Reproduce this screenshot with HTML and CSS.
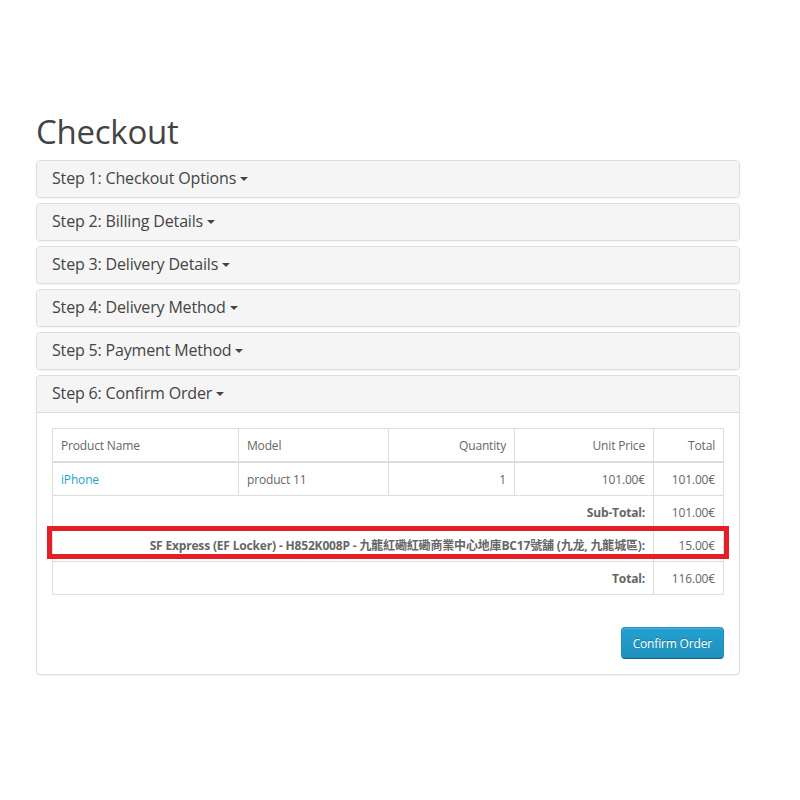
FILE: index.html
```html
<!DOCTYPE html>
<html>
<head>
<meta charset="utf-8">
<link rel="stylesheet" href="styles.css">
</head>
<body>
<div class="container">
  <h1 class="title">Checkout</h1>
  <div class="panel"><div class="panel-heading"><span>Step 1: Checkout Options</span><i class="caret"></i></div></div>
  <div class="panel"><div class="panel-heading"><span>Step 2: Billing Details</span><i class="caret"></i></div></div>
  <div class="panel"><div class="panel-heading"><span>Step 3: Delivery Details</span><i class="caret"></i></div></div>
  <div class="panel"><div class="panel-heading"><span>Step 4: Delivery Method</span><i class="caret"></i></div></div>
  <div class="panel"><div class="panel-heading"><span>Step 5: Payment Method</span><i class="caret"></i></div></div>
  <div class="panel">
    <div class="panel-heading open"><span>Step 6: Confirm Order</span><i class="caret"></i></div>
    <div class="panel-body">
      <div class="table-wrap">
        <table class="order">
          <thead>
            <tr>
              <td class="c1">Product Name</td>
              <td class="c2">Model</td>
              <td class="c3 r">Quantity</td>
              <td class="c4 r">Unit Price</td>
              <td class="c5 r">Total</td>
            </tr>
          </thead>
          <tbody>
            <tr>
              <td><a class="link">iPhone</a></td>
              <td>product 11</td>
              <td class="r">1</td>
              <td class="r">101.00€</td>
              <td class="r">101.00€</td>
            </tr>
          </tbody>
          <tfoot>
            <tr>
              <td colspan="4" class="r b">Sub-Total:</td>
              <td class="r">101.00€</td>
            </tr>
            <tr>
              <td colspan="4" class="r b">SF Express (EF Locker) - H852K008P - 九龍紅磡紅磡商業中心地庫BC17號舗 (九龙, 九龍城區):</td>
              <td class="r">15.00€</td>
            </tr>
            <tr>
              <td colspan="4" class="r b">Total:</td>
              <td class="r">116.00€</td>
            </tr>
          </tfoot>
        </table>
        <div class="highlight"></div>
      </div>
      <div class="buttons">
        <button class="btn">Confirm Order</button>
      </div>
    </div>
  </div>
</div>
</body>
</html>
```
FILE: styles.css
```css
html, body {
  margin: 0;
  padding: 0;
  background: #fff;
}
body {
  font-family: "Open Sans", "Noto Sans CJK TC", sans-serif;
  color: #666;
  font-size: 12px;
  letter-spacing: -0.17px;
}
.container {
  width: 704px;
  margin-left: 36px;
  padding-top: 114px;
}
.title {
  font-size: 33px;
  font-weight: 400;
  line-height: 36px;
  color: #444;
  margin: 0 0 10px 0;
  letter-spacing: -0.25px;
}
.panel {
  border: 1px solid #ddd;
  border-radius: 4px;
  background: #fff;
  margin-bottom: 5px;
  box-shadow: 0 1px 1px rgba(0,0,0,0.05);
}
.panel-heading {
  background: #f5f5f5;
  padding: 0 15px 2px 15px;
  height: 34px;
  display: flex;
  align-items: center;
  font-size: 16px;
  color: #444;
  border-radius: 3px;
}
.panel-heading.open {
  border-bottom: 1px solid #ddd;
  border-radius: 3px 3px 0 0;
}
.caret {
  display: inline-block;
  width: 0;
  height: 0;
  margin-left: 4px;
  margin-top: 2px;
  border-top: 4px solid #444;
  border-left: 4px solid transparent;
  border-right: 4px solid transparent;
}
.panel-body {
  padding: 15px;
}
.table-wrap {
  position: relative;
}
.order {
  width: 100%;
  border-collapse: collapse;
  font-size: 12px;
  color: #666;
}
.order td {
  border: 1px solid #ddd;
  padding: 0 8px;
  height: 32px;
  line-height: 17px;
  vertical-align: middle;
}
.order thead td {
  border-bottom-width: 2px;
}
.c1 { width: 169px; }
.c2 { width: 133px; }
.c3 { width: 109px; }
.c4 { width: 122px; }
.r { text-align: right; }
.b { font-weight: 700; }
.link {
  color: #23a1d1;
  text-decoration: none;
}
.highlight {
  position: absolute;
  left: -5px;
  top: 98px;
  width: 672px;
  height: 23px;
  border: 5px solid #e41e26;
  pointer-events: none;
}
.buttons {
  display: flex;
  justify-content: flex-end;
  margin-top: 32px;
}
.btn {
  font-family: "Open Sans", sans-serif;
  font-size: 12px;
  letter-spacing: -0.17px;
  color: #fff;
  background: linear-gradient(to bottom, #23a1d1, #1f90bb);
  border: 1px solid #1f90bb;
  border-bottom-color: #145e7a;
  border-radius: 4px;
  height: 32px;
  padding: 0 11px;
  text-shadow: 0 -1px 0 rgba(0,0,0,0.25);
  box-shadow: inset 0 1px 0 rgba(255,255,255,0.2);
}
```
